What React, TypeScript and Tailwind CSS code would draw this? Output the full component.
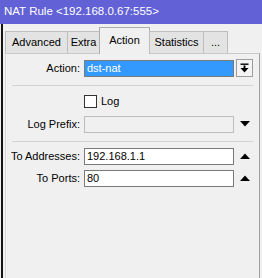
const tabs = [
  { label: "Advanced", w: "w-[63px]" },
  { label: "Extra", w: "w-[33px]" },
  { label: "Action", w: "w-[51px]", active: true },
  { label: "Statistics", w: "w-[55px]" },
  { label: "...", w: "w-[25px]" },
];

function DownBarIcon() {
  return (
    <svg width="9" height="10" viewBox="0 0 9 10">
      <rect x="0.5" y="0.5" width="8" height="1.4" fill="#000" />
      <rect x="3.5" y="2.5" width="2" height="3" fill="#000" />
      <polygon points="0.5,5 8.5,5 4.5,9.5" fill="#000" />
    </svg>
  );
}

function Tri({ up }: { up?: boolean }) {
  return (
    <svg width="10" height="6" viewBox="0 0 10 6">
      <polygon points={up ? "0,6 10,6 5,0.5" : "0,0 10,0 5,5.5"} fill="#000" />
    </svg>
  );
}

function Row({ label, children, trail }: { label: string; children: React.ReactNode; trail?: React.ReactNode }) {
  return (
    <div className="flex items-center h-[18px]">
      <div className="w-[76px] text-right pr-[2px] shrink-0">{label}</div>
      <div className="w-[150px] ml-[2px] shrink-0">{children}</div>
      <div className="w-[17px] ml-[2px] flex items-center justify-center">{trail}</div>
    </div>
  );
}

function Separator() {
  return <div className="mx-[6px] border-t border-[#d2d2d2]" />;
}

export default function App() {
  return (
    <div className="w-[262px] h-[278px] overflow-hidden bg-[#f0f0f0] flex flex-col text-[11px] text-black font-['Liberation_Sans',Arial,sans-serif]">
      <div className="h-[24px] shrink-0 bg-[#6262d6] text-white text-[11.5px] flex items-center pl-[4px]">
        NAT Rule &lt;192.168.0.67:555&gt;
      </div>

      <div className="flex-1 flex flex-col ml-px border-l-2 border-[#141414] pl-[2px] pr-[2px]">
        <div className="relative z-10 flex items-end h-[29px] pt-[3px]">
          {tabs.map((t) =>
            t.active ? (
              <div
                key={t.label}
                className={`${t.w} h-[27px] -mb-px -ml-px border border-b-0 border-[#adadad] bg-[#f0f0f0] flex items-center justify-center pb-[2px]`}
              >
                {t.label}
              </div>
            ) : (
              <div
                key={t.label}
                className={`${t.w} h-[22px] -ml-px first:ml-0 border border-b-0 border-[#bdbdbd] bg-[#e3e3e3] flex items-center justify-center`}
              >
                {t.label}
              </div>
            )
          )}
        </div>

        <div className="flex-1 border-t border-l border-r border-t-[#c9c9c9] border-l-[#d9d9d9] border-r-[#a0a0a0] pt-[5px]">
          <Row
            label="Action:"
            trail={
              <div className="w-[18px] h-[18px] border border-[#9c9c9c] bg-[#f4f4f4] flex items-center justify-center">
                <DownBarIcon />
              </div>
            }
          >
            <div className="h-[17px] border border-[#7a7a7a] bg-[#3399ff] text-white flex items-center pl-[2px]">
              dst-nat
            </div>
          </Row>

          <div className="h-[8px]" />
          <Separator />

          <div className="flex items-center h-[14px] mt-[8px]">
            <div className="w-[78px] shrink-0" />
            <div className="w-[13px] h-[13px] border border-[#333] bg-white" />
            <span className="ml-[4px]">Log</span>
          </div>

          <div className="mt-[7px]">
            <Row label="Log Prefix:" trail={<Tri />}>
              <div className="h-[17px] border border-[#bdbdbd] bg-[#f0f0f0]" />
            </Row>
          </div>

          <div className="h-[8px]" />
          <Separator />

          <div className="mt-[5px] flex flex-col gap-[4px]">
            <Row label="To Addresses:" trail={<Tri up />}>
              <div className="h-[17px] border border-[#7a7a7a] bg-white flex items-center pl-[2px]">192.168.1.1</div>
            </Row>
            <Row label="To Ports:" trail={<Tri up />}>
              <div className="h-[17px] border border-[#7a7a7a] bg-white flex items-center pl-[2px]">80</div>
            </Row>
          </div>
        </div>
      </div>
    </div>
  );
}
